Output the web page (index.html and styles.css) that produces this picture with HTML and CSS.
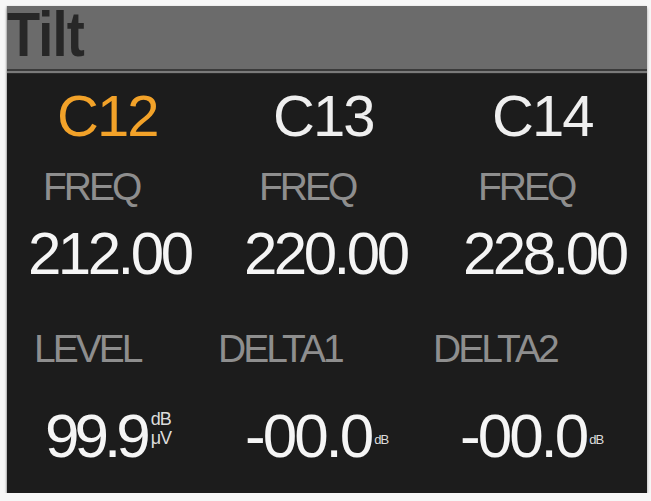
FILE: index.html
```html
<!DOCTYPE html>
<html lang="en">
<head>
<meta charset="utf-8">
<title>Tilt</title>
<link rel="stylesheet" href="styles.css">
</head>
<body>
<div class="panel">
  <header class="panel-head">
    <h1 class="panel-title">Tilt</h1>
  </header>
  <main class="panel-body">
    <section class="channels">
      <div class="channel channel--active">
        <div class="channel-name">C12</div>
        <div class="field-label">FREQ</div>
        <div class="channel-freq">212.00</div>
      </div>
      <div class="channel">
        <div class="channel-name">C13</div>
        <div class="field-label">FREQ</div>
        <div class="channel-freq">220.00</div>
      </div>
      <div class="channel">
        <div class="channel-name">C14</div>
        <div class="field-label">FREQ</div>
        <div class="channel-freq">228.00</div>
      </div>
    </section>
    <section class="readings">
      <div class="reading reading--level">
        <div class="field-label">LEVEL</div>
        <div class="reading-value">
          <span class="reading-num">99.9</span>
          <span class="unit unit--stack"><span>dB</span><span>μV</span></span>
        </div>
      </div>
      <div class="reading">
        <div class="field-label">DELTA1</div>
        <div class="reading-value">
          <span class="reading-num reading-num--signed">-00.0</span>
          <span class="unit unit--small">dB</span>
        </div>
      </div>
      <div class="reading">
        <div class="field-label">DELTA2</div>
        <div class="reading-value">
          <span class="reading-num reading-num--signed">-00.0</span>
          <span class="unit unit--small">dB</span>
        </div>
      </div>
    </section>
  </main>
</div>
</body>
</html>
```
FILE: styles.css
```css
html, body {
  margin: 0;
  padding: 0;
  background: #f7f7f7;
}

body {
  font-family: "Liberation Sans", Arial, sans-serif;
}

.panel {
  margin: 6px 0 0 7px;
  width: 640px;
  height: 487px;
  display: flex;
  flex-direction: column;
  background: #1c1c1c;
  box-shadow: 0 2px 3px rgba(0, 0, 0, 0.35), -1px 0 1px rgba(0, 0, 0, 0.12);
}

/* title strip */
.panel-head {
  height: 63px;
  background: #6b6b6b;
  border-bottom: 2px solid #3a3a3a;
}

.panel-title {
  display: inline-block;
  margin: 0;
  padding-top: 2px;
  font-size: 63px;
  line-height: 53px;
  font-weight: bold;
  letter-spacing: -1px;
  color: #272727;
  transform: scaleX(0.86);
  transform-origin: left center;
}

.panel-body {
  flex: 1;
  border-top: 2px solid #7a7a7a;
  box-shadow: inset 0 1px 0 #2a2a2a;
  padding-top: 14px;
}

/* channel columns: name, FREQ label, frequency */
.channels {
  display: grid;
  grid-template-columns: 216px 219px 1fr;
}

.channel-name {
  padding-left: 50px;
  font-size: 58px;
  line-height: 58px;
  letter-spacing: -2px;
  color: #efefef;
}

.channel--active .channel-name {
  color: #f2a229;
}

.field-label {
  font-size: 39px;
  line-height: 39px;
  letter-spacing: -3px;
  color: #8e8e8e;
}

.channel .field-label {
  margin-top: 22px;
  padding-left: 36px;
}

.channel-freq {
  margin-top: 18px;
  padding-left: 21px;
  font-size: 60px;
  line-height: 60px;
  letter-spacing: -3.5px;
  color: #f5f5f5;
}

/* level / delta readouts */
.readings {
  display: grid;
  grid-template-columns: 200px 215px 1fr;
  margin-top: 45px;
}

.reading .field-label {
  padding-left: 11px;
}

.reading--level .field-label {
  padding-left: 27px;
}

.reading-value {
  display: flex;
  align-items: flex-start;
  margin-top: 37px;
  padding-left: 38px;
  color: #f5f5f5;
}

.reading-num {
  font-size: 62px;
  line-height: 62px;
  letter-spacing: -5px;
}

.reading-num--signed {
  letter-spacing: -3px;
}

.unit {
  color: #dcdcdc;
  margin-left: 5px;
}

.unit--stack {
  display: flex;
  flex-direction: column;
  margin-top: 5px;
  font-size: 18px;
  line-height: 19px;
  letter-spacing: -1px;
}

.unit--small {
  margin-top: 28px;
  margin-left: 3px;
  font-size: 13px;
  line-height: 13px;
  letter-spacing: -1px;
}
```
